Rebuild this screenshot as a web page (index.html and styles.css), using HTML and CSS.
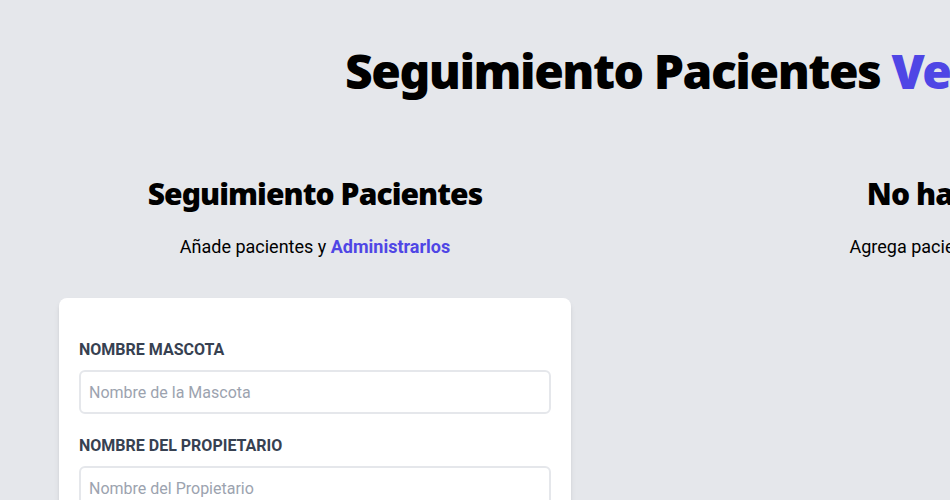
FILE: index.html
```html
<!DOCTYPE html>
<html lang="es">
<head>
<meta charset="utf-8">
<title>Seguimiento Pacientes Veterinaria</title>
<link rel="stylesheet" href="styles.css">
</head>
<body>
<div class="app">
  <header class="header">
    <h1 class="title">Seguimiento Pacientes <span class="accent">Veterinaria</span></h1>
  </header>
  <main class="columns">
    <section class="col-form">
      <h2 class="subtitle">Seguimiento Pacientes</h2>
      <p class="lead">Añade pacientes y <span class="lead-strong">Administrarlos</span></p>
      <form class="card">
        <div class="field">
          <label class="label" for="mascota">Nombre Mascota</label>
          <input class="input" id="mascota" type="text" placeholder="Nombre de la Mascota">
        </div>
        <div class="field">
          <label class="label" for="propietario">Nombre del Propietario</label>
          <input class="input" id="propietario" type="text" placeholder="Nombre del Propietario">
        </div>
        <div class="field">
          <label class="label" for="email">Email</label>
          <input class="input" id="email" type="email" placeholder="Email Contacto Propietario">
        </div>
      </form>
    </section>
    <section class="col-list">
      <h2 class="subtitle">No hay pacientes</h2>
      <p class="lead">Agrega pacientes y <span class="lead-strong">aparecerán aquí</span></p>
    </section>
  </main>
</div>
</body>
</html>
```
FILE: styles.css
```css
html {
  overflow: hidden;
}
body {
  margin: 0;
  background: #e5e7eb;
  color: #000;
  font-family: Roboto, "Liberation Sans", sans-serif;
}
.app {
  width: 1502px;
}
.header {
  padding-top: 47px;
}
.title {
  margin: 0;
  font-family: "Noto Sans", sans-serif;
  font-weight: 900;
  font-size: 48px;
  line-height: 1;
  letter-spacing: -0.031em;
  text-align: center;
}
.accent {
  color: #4f46e5;
}
.columns {
  display: flex;
  gap: 40px;
  padding-left: 59px;
  margin-top: 81px;
}
.col-form {
  width: 512px;
  flex: none;
}
.col-list {
  width: 764px;
  flex: none;
}
.subtitle {
  margin: 0;
  font-family: "Noto Sans", sans-serif;
  font-weight: 900;
  font-size: 30px;
  line-height: 36px;
  letter-spacing: -0.031em;
  text-align: center;
}
.lead {
  margin: 21px 0 37px;
  font-size: 18px;
  line-height: 28px;
  text-align: center;
}
.lead-strong {
  color: #4f46e5;
  font-weight: 700;
}
.card {
  background: #fff;
  border-radius: 8px;
  padding: 40px 20px;
  box-shadow: 0 4px 6px -1px rgba(0,0,0,0.1), 0 2px 4px -2px rgba(0,0,0,0.1);
}
.field {
  margin-bottom: 20px;
}
.label {
  display: block;
  color: #374151;
  font-weight: 700;
  font-size: 16px;
  line-height: 24px;
  text-transform: uppercase;
}
.input {
  display: block;
  box-sizing: border-box;
  width: 100%;
  margin-top: 8px;
  padding: 8px;
  border: 2px solid #e5e7eb;
  border-radius: 6px;
  font-family: inherit;
  font-size: 16px;
  line-height: 24px;
  height: 44px;
  color: #111827;
  background: #fff;
  outline: none;
}
.input::placeholder {
  color: #9ca3af;
}
```
